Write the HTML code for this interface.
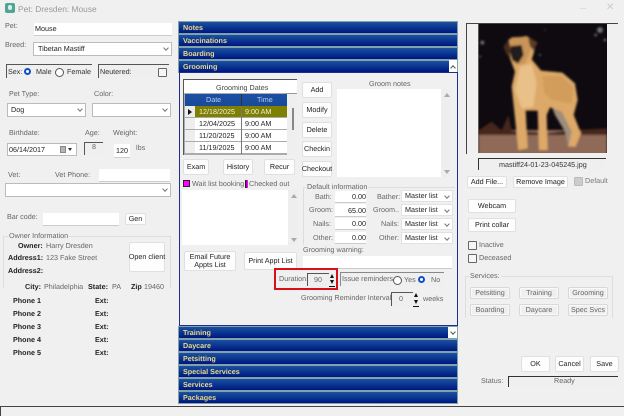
<!DOCTYPE html>
<html><head><meta charset="utf-8"><style>
html,body{margin:0;padding:0}
body{width:624px;height:416px;overflow:hidden;background:#f0f0f0;position:relative;font-family:"Liberation Sans",sans-serif;font-size:7.2px;color:#333;text-rendering:geometricPrecision}
#w{position:absolute;left:0;top:0;width:624px;height:416px;filter:blur(.35px)}
#w div,#w svg{position:absolute}
.t{white-space:nowrap;line-height:10px;height:10px}
.g{color:#666}
.b{font-weight:bold;color:#222}
.in{background:#fff;border-bottom:1px solid #ccc}
.cb{background:#fff;border:1px solid #bbb;box-sizing:border-box;line-height:12px;padding-left:3px;white-space:nowrap;color:#222}
.cb:after{content:"";position:absolute;right:3px;top:3px;width:3px;height:3px;border:solid #777;border-width:0 1px 1px 0;transform:rotate(45deg)}
.ml{border-color:#e2e2e2}
.btn{background:#fdfdfd;border:1px solid #e0e0e0;border-radius:2px;box-sizing:border-box;text-align:center;color:#222;display:flex;align-items:center;justify-content:center;line-height:8.5px;white-space:nowrap}
.dis{background:#efefef;border:1px solid #d8d8d8;box-shadow:inset 0 0 0 1px #fafafa;color:#666}
.sk{border-top:1px solid #555;border-left:1px solid #555;box-sizing:border-box;background:#efefef}
.bar{left:178px;width:280px;height:13px;box-sizing:border-box;border:1px solid #7fa3ad;background:linear-gradient(#1d509f,#0a3590 50%,#00157f);color:#ead98a;font-weight:bold;font-size:7.2px;line-height:11px;padding-left:4px;white-space:nowrap}
.rd{width:7px;height:7px;border:1px solid #555;border-radius:50%;background:#fff}
.rs{width:3px;height:3px;border:2px solid #0a50c8;border-radius:50%;background:#fff;outline:0;box-sizing:content-box}
.ck{width:7px;height:7px;border:1px solid #666;border-radius:1px;background:#f6f6f6}
.fs{border:1px solid #ddd;box-sizing:border-box}
.rh{left:185px;width:10px;height:11px;background:#eee}
.rt{color:#222;line-height:11px;height:11px;white-space:nowrap}
.sp{width:6px;background:#222}
</style></head><body><div id="w">

<!-- title -->
<div style="left:5px;top:3px;width:10px;height:10px;background:#4fa595;border-radius:2px"></div>
<div style="left:8px;top:5px;width:4px;height:5px;background:#d8efe8;border-radius:2px"></div>
<div class="t" style="left:18px;top:4px;font-size:8.4px;color:#999">Pet: Dresden: Mouse</div>
<div style="left:580px;top:8px;width:6px;height:1px;background:#ddd"></div>
<div class="t" style="left:606px;top:3px;font-size:10px;color:#ccc">✕</div>

<!-- left -->
<div class="t g" style="left:5px;top:21px">Pet:</div>
<div class="in" style="left:34px;top:23px;width:138px;height:12px"></div>
<div class="t" style="left:35px;top:24px;color:#222">Mouse</div>
<div class="t g" style="left:5px;top:40px">Breed:</div>
<div class="cb" style="left:33px;top:42px;width:139px;height:14px;padding-left:4px">Tibetan Mastiff</div>

<div class="sk" style="left:6px;top:64px;width:86px;height:14px"></div>
<div class="t" style="left:8px;top:67px">Sex:</div>
<div class="rs" style="left:24px;top:68px"></div>
<div class="t" style="left:36px;top:67px">Male</div>
<div class="rd" style="left:55px;top:68px"></div>
<div class="t" style="left:67px;top:67px">Female</div>
<div class="sk" style="left:98px;top:64px;width:71px;height:14px"></div>
<div class="t" style="left:100px;top:67px">Neutered:</div>
<div class="ck" style="left:158px;top:68px"></div>

<div class="t g" style="left:9px;top:89px">Pet Type:</div>
<div class="t g" style="left:94px;top:89px">Color:</div>
<div class="cb" style="left:7px;top:103px;width:79px;height:14px">Dog</div>
<div class="cb" style="left:92px;top:103px;width:79px;height:14px"></div>

<div class="t g" style="left:9px;top:128px">Birthdate:</div>
<div class="t g" style="left:85px;top:128px">Age:</div>
<div class="t g" style="left:113px;top:128px">Weight:</div>
<div style="left:7px;top:143px;width:70px;height:13px;background:#fff;border:1px solid #bbb;box-sizing:border-box;line-height:11px;padding-left:1px;color:#222">06/14/2017</div>
<div style="left:60px;top:146px;width:6px;height:7px;background:#b4b4b4;border:1px solid #888;box-sizing:border-box"></div>
<div style="left:68px;top:148px;border-top:3px solid #333;border-left:2px solid transparent;border-right:2px solid transparent"></div>
<div class="sk" style="left:84px;top:142px;width:19px;height:13px"></div>
<div class="t g" style="left:92px;top:142px">8</div>
<div class="in" style="left:114px;top:144px;width:16px;height:13px"></div>
<div class="t" style="left:116px;top:146px;color:#222">120</div>
<div class="t g" style="left:136px;top:143px">lbs</div>

<div class="t g" style="left:8px;top:170px">Vet:</div>
<div class="t g" style="left:55px;top:170px">Vet Phone:</div>
<div class="in" style="left:99px;top:169px;width:71px;height:12px"></div>
<div class="cb" style="left:5px;top:183px;width:166px;height:14px"></div>

<div class="t g" style="left:7px;top:212px">Bar code:</div>
<div class="in" style="left:43px;top:213px;width:76px;height:12px"></div>
<div class="btn" style="left:125px;top:213px;width:21px;height:12px">Gen</div>

<div class="fs" style="left:3px;top:236px;width:168px;height:52px;border-bottom:0"></div>
<div class="t g" style="left:8px;top:231px;background:#f0f0f0;padding:0 1px">Owner Information</div>
<div class="t b" style="left:18px;top:241px">Owner:</div>
<div class="t g" style="left:46px;top:241px">Harry Dresden</div>
<div class="t b" style="left:8px;top:253px">Address1:</div>
<div class="t g" style="left:46px;top:253px">123 Fake Street</div>
<div class="t b" style="left:8px;top:266px">Address2:</div>
<div class="btn" style="left:129px;top:242px;width:36px;height:30px">Open client</div>
<div class="t b" style="left:25px;top:282px">City:</div>
<div class="t g" style="left:44px;top:282px">Philadelphia</div>
<div class="t b" style="left:88px;top:282px">State:</div>
<div class="t g" style="left:112px;top:282px">PA</div>
<div class="t b" style="left:131px;top:282px">Zip</div>
<div class="t g" style="left:144px;top:282px">19460</div>
<div class="t b" style="left:13px;top:296px">Phone 1</div><div class="t b" style="left:95px;top:296px">Ext:</div>
<div class="t b" style="left:13px;top:309px">Phone 2</div><div class="t b" style="left:95px;top:309px">Ext:</div>
<div class="t b" style="left:13px;top:322px">Phone 3</div><div class="t b" style="left:95px;top:322px">Ext:</div>
<div class="t b" style="left:13px;top:335px">Phone 4</div><div class="t b" style="left:95px;top:335px">Ext:</div>
<div class="t b" style="left:13px;top:348px">Phone 5</div><div class="t b" style="left:95px;top:348px">Ext:</div>

<div style="left:0;top:406px;width:624px;height:1px;background:#444"></div>
<div style="left:0;top:406px;width:1px;height:10px;background:#444"></div>

<!-- center bars -->
<div class="bar" style="top:21px">Notes</div>
<div class="bar" style="top:34px">Vaccinations</div>
<div class="bar" style="top:47px">Boarding</div>
<div class="bar" style="top:60px">Grooming</div>
<div style="left:449px;top:60px;width:8px;height:12px;background:#fff"></div>
<div style="left:451px;top:66px;width:3px;height:3px;border:solid #555;border-width:1px 0 0 1px;transform:rotate(45deg)"></div>
<div style="left:179px;top:72px;width:279px;height:254px;box-sizing:border-box;border:1px solid #1c2f90;background:#f0f0f0"></div>

<!-- grid -->
<div class="sk" style="left:183px;top:79px;width:114px;height:76px;background:#ababab;border-width:1px 0 0 1px"></div>
<div style="left:184px;top:80px;width:113px;height:13px;background:#fff"></div>
<div style="left:286px;top:93px;width:11px;height:1px;background:#999"></div>
<div class="t" style="left:216px;top:83px;color:#444">Grooming Dates</div>
<div style="left:185px;top:94px;width:102px;height:12px;background:linear-gradient(#1b50a4,#184a98)"></div>
<div style="left:241px;top:94px;width:1px;height:12px;background:#333"></div>
<div class="t" style="left:206px;top:95px;color:#b8cde8">Date</div>
<div class="t" style="left:257px;top:95px;color:#b8cde8">Time</div>

<div class="rh" style="top:106px;background:#ececec"></div>
<div style="left:195px;top:106px;width:92px;height:11px;background:#808000"></div>
<div class="rt" style="left:199px;top:106px;color:#eee">12/18/2025</div>
<div class="rt" style="left:245px;top:106px;color:#eee">9:00 AM</div>
<div style="left:188px;top:109px;border-left:4px solid #111;border-top:3px solid transparent;border-bottom:3px solid transparent"></div>

<div class="rh" style="top:118px"></div><div style="left:195px;top:118px;width:92px;height:11px;background:#fff"></div>
<div class="rt" style="left:199px;top:118px">12/04/2025</div><div class="rt" style="left:245px;top:118px">9:00 AM</div>
<div class="rh" style="top:130px"></div><div style="left:195px;top:130px;width:92px;height:11px;background:#fff"></div>
<div class="rt" style="left:199px;top:130px">11/20/2025</div><div class="rt" style="left:245px;top:130px">9:00 AM</div>
<div class="rh" style="top:142px"></div><div style="left:195px;top:142px;width:92px;height:11px;background:#fff"></div>
<div class="rt" style="left:199px;top:142px">11/19/2025</div><div class="rt" style="left:245px;top:142px">9:00 AM</div>
<div style="left:241px;top:106px;width:1px;height:48px;background:#777"></div>
<div style="left:287px;top:94px;width:10px;height:61px;background:#efefef"></div>
<div style="left:292px;top:108px;width:2px;height:22px;background:#888"></div>

<!-- side buttons -->
<div class="btn" style="left:302px;top:82px;width:30px;height:16px">Add</div>
<div class="btn" style="left:302px;top:102px;width:30px;height:16px">Modify</div>
<div class="btn" style="left:302px;top:122px;width:30px;height:16px">Delete</div>
<div class="btn" style="left:302px;top:141px;width:30px;height:16px">Checkin</div>
<div class="btn" style="left:302px;top:161px;width:30px;height:16px">Checkout</div>

<div class="t g" style="left:369px;top:79px">Groom notes</div>
<div style="left:337px;top:89px;width:104px;height:88px;background:#fff"></div>
<div style="left:441px;top:89px;width:10px;height:88px;background:#eee"></div>
<div style="left:444px;top:93px;border-bottom:4px solid #aaa;border-left:3px solid transparent;border-right:3px solid transparent"></div>
<div style="left:444px;top:170px;border-top:4px solid #aaa;border-left:3px solid transparent;border-right:3px solid transparent"></div>

<div class="btn" style="left:183px;top:159px;width:26px;height:16px">Exam</div>
<div class="btn" style="left:223px;top:159px;width:30px;height:16px">History</div>
<div class="btn" style="left:264px;top:159px;width:31px;height:16px">Recur</div>

<div style="left:183px;top:180px;width:7px;height:7px;background:#f0f;border:1px solid #222;box-sizing:border-box"></div>
<div class="t g" style="left:192px;top:179px">Wait list booking</div>
<div style="left:245px;top:180px;width:3px;height:8px;background:linear-gradient(90deg,#222 50%,#f0f 50%)"></div>
<div class="t g" style="left:249px;top:179px">Checked out</div>
<div style="left:182px;top:190px;width:106px;height:55px;background:#fff"></div>
<div style="left:288px;top:190px;width:10px;height:55px;background:#eee"></div>
<div style="left:291px;top:194px;border-bottom:4px solid #aaa;border-left:3px solid transparent;border-right:3px solid transparent"></div>
<div style="left:291px;top:238px;border-top:4px solid #aaa;border-left:3px solid transparent;border-right:3px solid transparent"></div>
<div class="btn" style="left:184px;top:251px;width:52px;height:20px">Email Future<br>Appts List</div>
<div class="btn" style="left:244px;top:252px;width:53px;height:18px">Print Appt List</div>

<!-- default info -->
<div class="fs" style="left:303px;top:187px;width:152px;height:58px;border-right:0;border-bottom:0"></div>
<div class="t g" style="left:306px;top:182px;background:#f0f0f0;padding:0 1px">Default information</div>
<div class="t g" style="left:315px;top:192px">Bath:</div>
<div class="t g" style="left:309px;top:205px">Groom:</div>
<div class="t g" style="left:313px;top:219px">Nails:</div>
<div class="t g" style="left:313px;top:233px">Other:</div>
<div class="in" style="left:335px;top:191px;width:31px;height:11px"></div>
<div class="in" style="left:335px;top:204px;width:31px;height:12px"></div>
<div class="in" style="left:335px;top:218px;width:31px;height:11px"></div>
<div class="in" style="left:335px;top:232px;width:31px;height:11px"></div>
<div class="t" style="left:352px;top:192px;color:#222">0.00</div>
<div class="t" style="left:348px;top:206px;color:#222">65.00</div>
<div class="t" style="left:352px;top:219px;color:#222">0.00</div>
<div class="t" style="left:352px;top:233px;color:#222">0.00</div>
<div class="t g" style="left:377px;top:192px">Bather:</div>
<div class="t g" style="left:373px;top:205px">Groom..</div>
<div class="t g" style="left:381px;top:219px">Nails:</div>
<div class="t g" style="left:379px;top:233px">Other:</div>
<div class="cb ml" style="left:401px;top:190px;width:52px;height:12px;line-height:10px">Master list</div>
<div class="cb ml" style="left:401px;top:204px;width:52px;height:12px;line-height:10px">Master list</div>
<div class="cb ml" style="left:401px;top:218px;width:52px;height:12px;line-height:10px">Master list</div>
<div class="cb ml" style="left:401px;top:232px;width:52px;height:12px;line-height:10px">Master list</div>
<div class="t g" style="left:303px;top:245px;background:#f0f0f0;padding-right:2px">Grooming warning:</div>
<div class="in" style="left:303px;top:256px;width:149px;height:12px"></div>

<!-- duration -->
<div style="left:274px;top:268px;width:64px;height:22px;box-sizing:border-box;border:2px solid #d81018"></div>
<div class="t g" style="left:279px;top:274px">Duration:</div>
<div class="sk" style="left:307px;top:273px;width:28px;height:13px"></div>
<div class="t g" style="left:314px;top:275px">90</div>
<div class="sp" style="left:329px;top:273px;height:13px;background:#eee;border-bottom:1px solid #111"></div>
<div style="left:330px;top:274px;border-bottom:4px solid #111;border-left:2.5px solid transparent;border-right:2.5px solid transparent"></div>
<div style="left:330px;top:280px;border-top:4px solid #111;border-left:2.5px solid transparent;border-right:2.5px solid transparent"></div>
<div class="sk" style="left:340px;top:272px;width:104px;height:14px;border-color:#888"></div>
<div class="t g" style="left:342px;top:274px">Issue reminders</div>
<div class="rd" style="left:393px;top:276px"></div>
<div class="t g" style="left:404px;top:275px">Yes</div>
<div class="rs" style="left:418px;top:276px"></div>
<div class="t g" style="left:431px;top:275px">No</div>

<div class="t g" style="left:301px;top:293px">Grooming Reminder Interval:</div>
<div class="sk" style="left:391px;top:292px;width:28px;height:14px"></div>
<div class="t g" style="left:399px;top:294px">0</div>
<div class="sp" style="left:413px;top:292px;height:14px;background:#eee;border-bottom:1px solid #111"></div>
<div style="left:414px;top:293px;border-bottom:4px solid #111;border-left:2.5px solid transparent;border-right:2.5px solid transparent"></div>
<div style="left:414px;top:300px;border-top:4px solid #111;border-left:2.5px solid transparent;border-right:2.5px solid transparent"></div>
<div class="t g" style="left:423px;top:294px">weeks</div>

<div class="bar" style="top:326px">Training</div>
<div style="left:448px;top:327px;width:9px;height:11px;background:#fff"></div>
<div style="left:451px;top:330px;width:3px;height:3px;border:solid #555;border-width:0 1px 1px 0;transform:rotate(45deg)"></div>
<div class="bar" style="top:339px">Daycare</div>
<div class="bar" style="top:352px">Petsitting</div>
<div class="bar" style="top:365px">Special Services</div>
<div class="bar" style="top:378px">Services</div>
<div class="bar" style="top:391px">Packages</div>

<!-- photo -->
<div style="left:466px;top:23px;width:152px;height:131px;background:#f0f0f0;border-top:1px solid #444;border-left:1px solid #444;box-sizing:border-box"></div>
<svg style="left:465px;top:0" width="159" height="180" viewBox="0 0 477 540">
<defs><filter id="s"><feGaussianBlur stdDeviation="3"/></filter><clipPath id="c"><rect x="40" y="72" width="386" height="387"/></clipPath></defs>
<rect x="40" y="72" width="386" height="387" fill="#0e0a10"/>
<g filter="url(#s)" clip-path="url(#c)">
<g fill="#6a6f70"><circle cx="405" cy="90" r="9"/><circle cx="392" cy="105" r="4"/><circle cx="52" cy="128" r="6"/><circle cx="45" cy="170" r="3"/><circle cx="240" cy="90" r="2"/><circle cx="420" cy="120" r="4"/><circle cx="225" cy="165" r="3"/></g>
<rect x="40" y="390" width="386" height="75" fill="#8f6b58"/>
<path d="M40 392 L80 365 L110 392 L130 345 L140 392 L250 400 L300 392 L426 385 V405 H40Z" fill="#46281f"/>
<path d="M260 318 L300 315 L328 395 L325 425 L310 440 L300 395 L270 345Z" fill="#9c8d7c"/>
<path d="M130 118 L185 108 L212 130 L206 160 L200 178 L228 212 L292 218 L330 250 L338 300 L326 345 L348 400 L332 440 L310 440 L320 395 L290 335 L255 322 L245 345 L248 450 L222 450 L218 332 L182 332 L188 445 L160 450 L148 335 L140 260 L150 215 L135 175Z" fill="#dda968"/>
<path d="M165 200 L200 190 L215 250 L205 320 L170 325 L150 270Z" fill="#e9c088"/>
<path d="M232 228 L290 228 L325 262 L320 310 L260 300 L238 280Z" fill="#d29c5a"/>
<path d="M132 118 L115 140 L128 170 L138 150Z" fill="#4a2c1c"/>
<path d="M190 110 L218 128 L205 152 L192 135Z" fill="#5c3a22"/>
<path d="M138 112 L188 110 L198 150 L180 190 L150 195 L135 160Z" fill="#c89458"/>
<path d="M138 138 L170 135 L176 165 L160 190 L142 182 L134 158Z" fill="#241a1c"/>
</g>
</svg>
<div class="sk" style="left:478px;top:158px;width:128px;height:12px;border-color:#333"></div>
<div class="t" style="left:499px;top:160px">mastiff24-01-23-045245.jpg</div>

<div class="btn" style="left:467px;top:176px;width:40px;height:12px">Add File...</div>
<div class="btn" style="left:513px;top:176px;width:55px;height:12px">Remove Image</div>
<div class="ck" style="left:574px;top:177px;background:#ccc;border-color:#bbb"></div>
<div class="t g" style="left:585px;top:176px;color:#777">Default</div>
<div class="btn" style="left:468px;top:199px;width:48px;height:14px">Webcam</div>
<div class="btn" style="left:468px;top:218px;width:48px;height:14px">Print collar</div>
<div class="ck" style="left:468px;top:241px"></div>
<div class="t g" style="left:479px;top:240px">Inactive</div>
<div class="ck" style="left:468px;top:254px"></div>
<div class="t g" style="left:479px;top:253px">Deceased</div>

<div class="fs" style="left:465px;top:276px;width:148px;height:42px;border-bottom:0"></div>
<div class="t g" style="left:469px;top:271px;background:#f0f0f0;padding:0 1px">Services:</div>
<div class="btn dis" style="left:470px;top:287px;width:40px;height:12px">Petsitting</div>
<div class="btn dis" style="left:519px;top:287px;width:40px;height:12px">Training</div>
<div class="btn dis" style="left:568px;top:287px;width:40px;height:12px">Grooming</div>
<div class="btn dis" style="left:470px;top:304px;width:40px;height:12px">Boarding</div>
<div class="btn dis" style="left:519px;top:304px;width:40px;height:12px">Daycare</div>
<div class="btn dis" style="left:568px;top:304px;width:40px;height:12px">Spec Svcs</div>

<div class="btn" style="left:521px;top:356px;width:29px;height:16px">OK</div>
<div class="btn" style="left:555px;top:356px;width:29px;height:16px">Cancel</div>
<div class="btn" style="left:590px;top:356px;width:29px;height:16px">Save</div>
<div class="t g" style="left:481px;top:376px">Status:</div>
<div class="sk" style="left:508px;top:376px;width:110px;height:11px;border-color:#333"></div>
<div class="t g" style="left:554px;top:376px">Ready</div>

</div></body></html>
